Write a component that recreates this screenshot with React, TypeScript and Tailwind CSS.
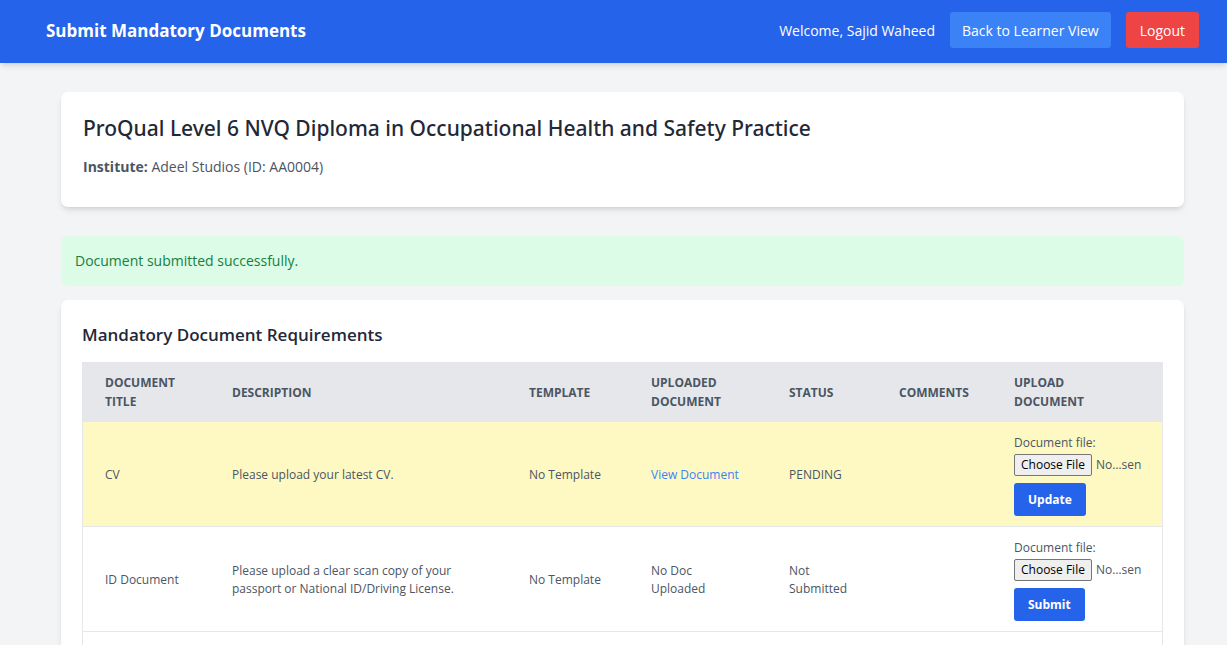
type Row = {
  title: string;
  description: string;
  uploaded: boolean;
  status: string;
  action: string;
};

const rows: Row[] = [
  {
    title: "CV",
    description: "Please upload your latest CV.",
    uploaded: true,
    status: "PENDING",
    action: "Update",
  },
  {
    title: "ID Document",
    description: "Please upload a clear scan copy of your passport or National ID/Driving License.",
    uploaded: false,
    status: "Not Submitted",
    action: "Submit",
  },
];

const columns = [
  { label: "Document Title", width: "w-[127px]" },
  { label: "Description", width: "w-auto" },
  { label: "Template", width: "w-[122px]" },
  { label: "Uploaded Document", width: "w-[138px]" },
  { label: "Status", width: "w-[110px]" },
  { label: "Comments", width: "w-[115px]" },
  { label: "Upload Document", width: "w-[170px]" },
];

function Header() {
  return (
    <header className="flex items-center justify-between bg-[#2563eb] pt-3 pb-[15px] pl-[46px] pr-7 text-white shadow-md">
      <h1 className="pt-0.5 text-[17px] leading-6 font-bold">Submit Mandatory Documents</h1>
      <div className="flex items-center gap-[15px] text-[14px] leading-[22px]">
        <span className="pt-0.5">Welcome, Sajid Waheed</span>
        <a href="#learner" className="rounded-[3px] bg-[#3b82f6] px-3 pt-2 pb-1.5">
          Back to Learner View
        </a>
        <a href="#logout" className="rounded-[3px] bg-[#ef4444] px-[14px] pt-2 pb-1.5">
          Logout
        </a>
      </div>
    </header>
  );
}

function UploadForm({ id, action }: { id: string; action: string }) {
  return (
    <form className="flex flex-col items-start" onSubmit={(e) => e.preventDefault()}>
      <label htmlFor={id}>Document file:</label>
      <input
        id={id}
        type="file"
        className="mt-[2px] h-[22px] w-[129px] leading-5 file:me-1 file:h-[22px] file:rounded-[2px] file:border file:border-solid file:border-[#767676] file:bg-[#efefef] file:px-[6px] file:text-black"
      />
      <button type="submit" className="mt-[7px] h-[33px] rounded-[3px] bg-[#2563eb] px-[14px] font-bold text-white">
        {action}
      </button>
    </form>
  );
}

export default function App() {
  return (
    <div className="flex min-h-screen flex-col bg-[#f3f4f6] font-['Open_Sans','Noto_Sans',sans-serif] text-[#4b5563]">
      <Header />
      <main className="flex flex-1 flex-col pt-[29px] pl-[61px] pr-[43px]">
        <section className="rounded-[7px] bg-white px-[22px] pt-[22px] pb-[29px] shadow-md">
          <h2 className="font-['Noto_Sans','Open_Sans',sans-serif] text-[21px] leading-7 font-medium text-[#1f2937]">
            ProQual Level 6 NVQ Diploma in Occupational Health and Safety Practice
          </h2>
          <p className="mt-[14px] text-[14px] leading-[22px]">
            <strong>Institute:</strong> Adeel Studios (ID: AA0004)
          </p>
        </section>

        <p role="status" className="mt-[29px] rounded-[7px] bg-[#dcfce7] px-[14px] py-[14px] text-[14px] leading-[22px] text-[#15803d]">
          Document submitted successfully.
        </p>

        <section className="mt-[14px] flex flex-1 flex-col rounded-t-[7px] bg-white px-[21px] pt-[22px] shadow-md">
          <h3 className="text-[17px] leading-[26px] font-semibold text-[#1f2937]">Mandatory Document Requirements</h3>
          <div className="mt-[14px] flex-1 border-x border-[#e5e7eb]">
            <table className="w-full table-fixed text-left text-[12px] leading-[18px]">
              <thead className="bg-[#e5e7eb] uppercase">
                <tr className="h-[60px]">
                  {columns.map((c) => (
                    <th key={c.label} scope="col" className={`${c.width} pl-[22px] pr-7 leading-[19px] font-bold`}>
                      {c.label}
                    </th>
                  ))}
                </tr>
              </thead>
              <tbody>
                {rows.map((r, i) => (
                  <tr key={r.title} className={`border-b border-[#e5e7eb] ${r.uploaded ? "bg-[#fef9c3]" : "bg-white"}`}>
                    <td className="pt-0.5 pl-[22px]">{r.title}</td>
                    <td className="px-[22px] pt-0.5">{r.description}</td>
                    <td className="pt-0.5 pl-[22px]">No Template</td>
                    <td className="px-[22px] pt-0.5">
                      {r.uploaded ? (
                        <a href="#document" className="whitespace-nowrap text-[#3b82f6]">
                          View Document
                        </a>
                      ) : (
                        "No Doc Uploaded"
                      )}
                    </td>
                    <td className="px-[22px] pt-0.5">{r.status}</td>
                    <td></td>
                    <td className="pt-3 pb-[10px] pl-[22px]">
                      <UploadForm id={`file-${i}`} action={r.action} />
                    </td>
                  </tr>
                ))}
              </tbody>
            </table>
          </div>
        </section>
      </main>
    </div>
  );
}
